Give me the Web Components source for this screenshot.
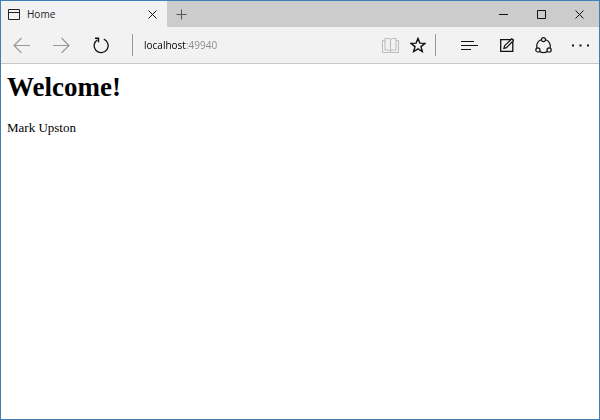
<!DOCTYPE html>
<html lang="en">
<head>
<meta charset="utf-8">
<title>Home</title>
<style>
  html, body {
    height: 100%;
    margin: 0;
  }

  body {
    font-family: "Open Sans", sans-serif;
    background: #fff;
  }
</style>
</head>
<body>
<browser-window>
  <title-bar slot="titlebar">
    <browser-tab>Home</browser-tab>
  </title-bar>
  <tool-bar slot="toolbar">
    <address-box slot="address" value="localhost:49940"></address-box>
  </tool-bar>
  <welcome-page name="Mark Upston"></welcome-page>
</browser-window>

<script>
// Stroke icons, all drawn on their own pixel grid
const ICONS = {
  page: [12, 11, '<path d="M.5 .5h11v10H.5z"/><path d="M.5 3.5h11"/>'],
  close: [9, 9, '<path d="M.5 .5l8 8M8.5 .5l-8 8"/>'],
  plus: [11, 11, '<path d="M5.5 .5v10M.5 5.5h10"/>'],
  minimize: [9, 9, '<path d="M0 4.5h9"/>'],
  maximize: [9, 9, '<path d="M.5 .5h8v8h-8z"/>'],
  back: [17, 16, '<path d="M1 8.5H17M8.5 1L1 8.5 8.5 16" stroke-width="1.2"/>'],
  forward: [17, 16, '<path d="M0 8.5h16M8.5 1L16 8.5 8.5 16" stroke-width="1.2"/>'],
  refresh: [16, 17, '<path d="M10.8 2.2a7 7 0 1 1-6.3.5" stroke-width="1.3"/><path d="M2 1.2h3.500v4" stroke-width="1.4"/>'],
  book: [17, 15, '<path d="M3 .5h3.500q2 0 2 1.500 0-1.500 2-1.500H14v11.500h-3.500q-2 0-2 1.500 0-1.500-2-1.500H3zM8.500 2v12M3 2.500H.5v12h16v-12H14"/>'],
  star: [16, 16, '<path d="M8 1.400l1.900 4.700 5 .3-3.900 3.200 1.300 4.900L8 11.800l-4.300 2.700L5 9.600 1.100 6.400l5-.3z" stroke-width="1.400"/>'],
  hub: [17, 11, '<path d="M0 1.5h13M0 5.5h17M0 9.5h10" stroke-width="1.1"/>'],
  note: [14, 14, '<path d="M.7 1.700h12.100v11.600H.7z" stroke-width="1.300"/><path d="M3.900 10.400l.7-2.600L11.800.7l1.700 1.700-7 7.200z" fill="#f2f2f2" stroke-width="1.200"/>'],
  share: [17, 17, '<path d="M6.2 2.800a6.500 6.500 0 0 0-4.200 8M10.800 2.800a6.500 6.500 0 0 1 4.200 8M4.700 14.600q3.800 2 7.600 0" stroke-width="1.200"/><circle cx="8.500" cy="2.700" r="2" stroke-width="1.200"/><circle cx="2.900" cy="12.900" r="2.100" stroke-width="1.200"/><circle cx="14.100" cy="12.900" r="2.100" stroke-width="1.200"/>'],
  more: [17, 3, '<path d="M0 1.5h2M7.5 1.5h2M15 1.5h2" stroke-width="2"/>'],
};

// Square button holding one icon
class IconButton extends HTMLElement {
  constructor() {
    super();
    this.attachShadow({ mode: 'open' });
  }

  connectedCallback() {
    const [width, height, shapes] = ICONS[this.getAttribute('icon')];
    const disabled = this.hasAttribute('disabled') ? 'disabled' : '';

    this.shadowRoot.innerHTML = `
      <style>
        :host {
          display: flex;
          flex: none;
          width: var(--button-width, 40px);
          color: #111;
        }

        button {
          display: flex;
          align-items: center;
          justify-content: center;
          width: 100%;
          padding: 0;
          border: 0;
          background: none;
          color: inherit;
        }

        button:enabled:hover {
          background: rgba(0, 0, 0, 0.08);
        }

        button:disabled {
          color: var(--disabled-color, #999);
        }

        svg {
          display: block;
          fill: none;
          stroke: currentColor;
        }
      </style>
      <button type="button" aria-label="${this.getAttribute('label')}" ${disabled}>
        <svg width="${width}" height="${height}" viewBox="0 0 ${width} ${height}" aria-hidden="true">${shapes}</svg>
      </button>
    `;
  }
}

class BrowserTab extends HTMLElement {
  constructor() {
    super();
    this.attachShadow({ mode: 'open' });
    this.shadowRoot.innerHTML = `
      <style>
        :host {
          display: flex;
          align-items: stretch;
          flex: 0 1 166px;
          box-sizing: border-box;
          padding-left: 7px;
          background: #f2f2f2;
          color: #222;
          font-size: 10px;
          line-height: 26px;
        }

        svg {
          flex: none;
          align-self: center;
          margin-right: 7px;
          fill: none;
          stroke: #222;
        }

        .title {
          flex: 1;
          min-width: 0;
          overflow: hidden;
          white-space: nowrap;
        }

        icon-button {
          --button-width: 30px;
        }
      </style>
      <svg width="12" height="11" viewBox="0 0 12 11" aria-hidden="true">${ICONS.page[2]}</svg>
      <span class="title"><slot></slot></span>
      <icon-button icon="close" label="Close tab"></icon-button>
    `;
  }
}

class TitleBar extends HTMLElement {
  constructor() {
    super();
    this.attachShadow({ mode: 'open' });
    this.shadowRoot.innerHTML = `
      <style>
        :host {
          display: flex;
          height: 26px;
          background: #ccc;
        }

        .new-tab {
          --button-width: 29px;
          color: #555;
        }

        .window {
          display: flex;
          margin-left: auto;
          padding-right: 1px;
          --button-width: 38px;
        }
      </style>
      <slot></slot>
      <icon-button class="new-tab" icon="plus" label="New tab"></icon-button>
      <div class="window">
        <icon-button icon="minimize" label="Minimize"></icon-button>
        <icon-button icon="maximize" label="Maximize"></icon-button>
        <icon-button icon="close" label="Close"></icon-button>
      </div>
    `;
  }
}

// Address field, the host is dark and the port after it is grey
class AddressBox extends HTMLElement {
  constructor() {
    super();
    this.attachShadow({ mode: 'open' });
  }

  connectedCallback() {
    this.shadowRoot.innerHTML = `
      <style>
        :host {
          display: flex;
          flex: 1;
          min-width: 0;
        }

        input {
          flex: 1;
          min-width: 0;
          padding: 0;
          border: 0;
          outline: 0;
          font: 10px/16px "Open Sans", sans-serif;
          color: #000;
          background: linear-gradient(to right, #000 42px, #888 42px);
          background-clip: text;
          -webkit-background-clip: text;
          -webkit-text-fill-color: transparent;
        }
      </style>
      <input type="text" aria-label="Address" spellcheck="false" value="${this.getAttribute('value')}">
    `;
  }
}

class ToolBar extends HTMLElement {
  constructor() {
    super();
    this.attachShadow({ mode: 'open' });
    this.shadowRoot.innerHTML = `
      <style>
        :host {
          display: flex;
          align-items: stretch;
          height: 36px;
          background: #f2f2f2;
          border-bottom: 1px solid #c8c8c8;
        }

        .divider {
          flex: none;
          align-self: center;
          width: 1px;
          height: 22px;
          background: #999;
        }

        .left {
          margin: 0 11px;
        }

        .right {
          margin: 0 15px 0 4px;
        }

        .page, .actions {
          display: flex;
        }

        .page {
          --button-width: 27px;
          --disabled-color: #bbb;
        }

        .actions {
          --button-width: 37px;
        }
      </style>
      <icon-button icon="back" label="Back" disabled></icon-button>
      <icon-button icon="forward" label="Forward" disabled></icon-button>
      <icon-button icon="refresh" label="Refresh"></icon-button>
      <span class="divider left"></span>
      <slot name="address"></slot>
      <div class="page">
        <icon-button icon="book" label="Reading view" disabled></icon-button>
        <icon-button icon="star" label="Add to favorites"></icon-button>
      </div>
      <span class="divider right"></span>
      <div class="actions">
        <icon-button icon="hub" label="Hub"></icon-button>
        <icon-button icon="note" label="Make a web note"></icon-button>
        <icon-button icon="share" label="Share"></icon-button>
        <icon-button icon="more" label="More actions"></icon-button>
      </div>
    `;
  }
}

class WelcomePage extends HTMLElement {
  constructor() {
    super();
    this.attachShadow({ mode: 'open' });
  }

  connectedCallback() {
    this.shadowRoot.innerHTML = `
      <style>
        :host {
          display: block;
          padding: 8px 6px;
          color: #000;
          font-family: "Liberation Serif", serif;
          font-size: 13px;
          line-height: 16px;
        }

        h1 {
          margin: 0 0 18px;
          font-size: 27px;
          line-height: 30px;
        }

        p {
          margin: 0;
        }
      </style>
      <h1>Welcome!</h1>
      <p>${this.getAttribute('name')}</p>
    `;
  }
}

class BrowserWindow extends HTMLElement {
  constructor() {
    super();
    this.attachShadow({ mode: 'open' });
    this.shadowRoot.innerHTML = `
      <style>
        :host {
          display: flex;
          flex-direction: column;
          box-sizing: border-box;
          min-height: 100%;
          border: 1px solid #4080b4;
          background: #fff;
        }

        main {
          flex: 1;
        }
      </style>
      <slot name="titlebar"></slot>
      <slot name="toolbar"></slot>
      <main><slot></slot></main>
    `;
  }
}

customElements.define('icon-button', IconButton);
customElements.define('browser-tab', BrowserTab);
customElements.define('title-bar', TitleBar);
customElements.define('address-box', AddressBox);
customElements.define('tool-bar', ToolBar);
customElements.define('welcome-page', WelcomePage);
customElements.define('browser-window', BrowserWindow);
</script>
</body>
</html>
